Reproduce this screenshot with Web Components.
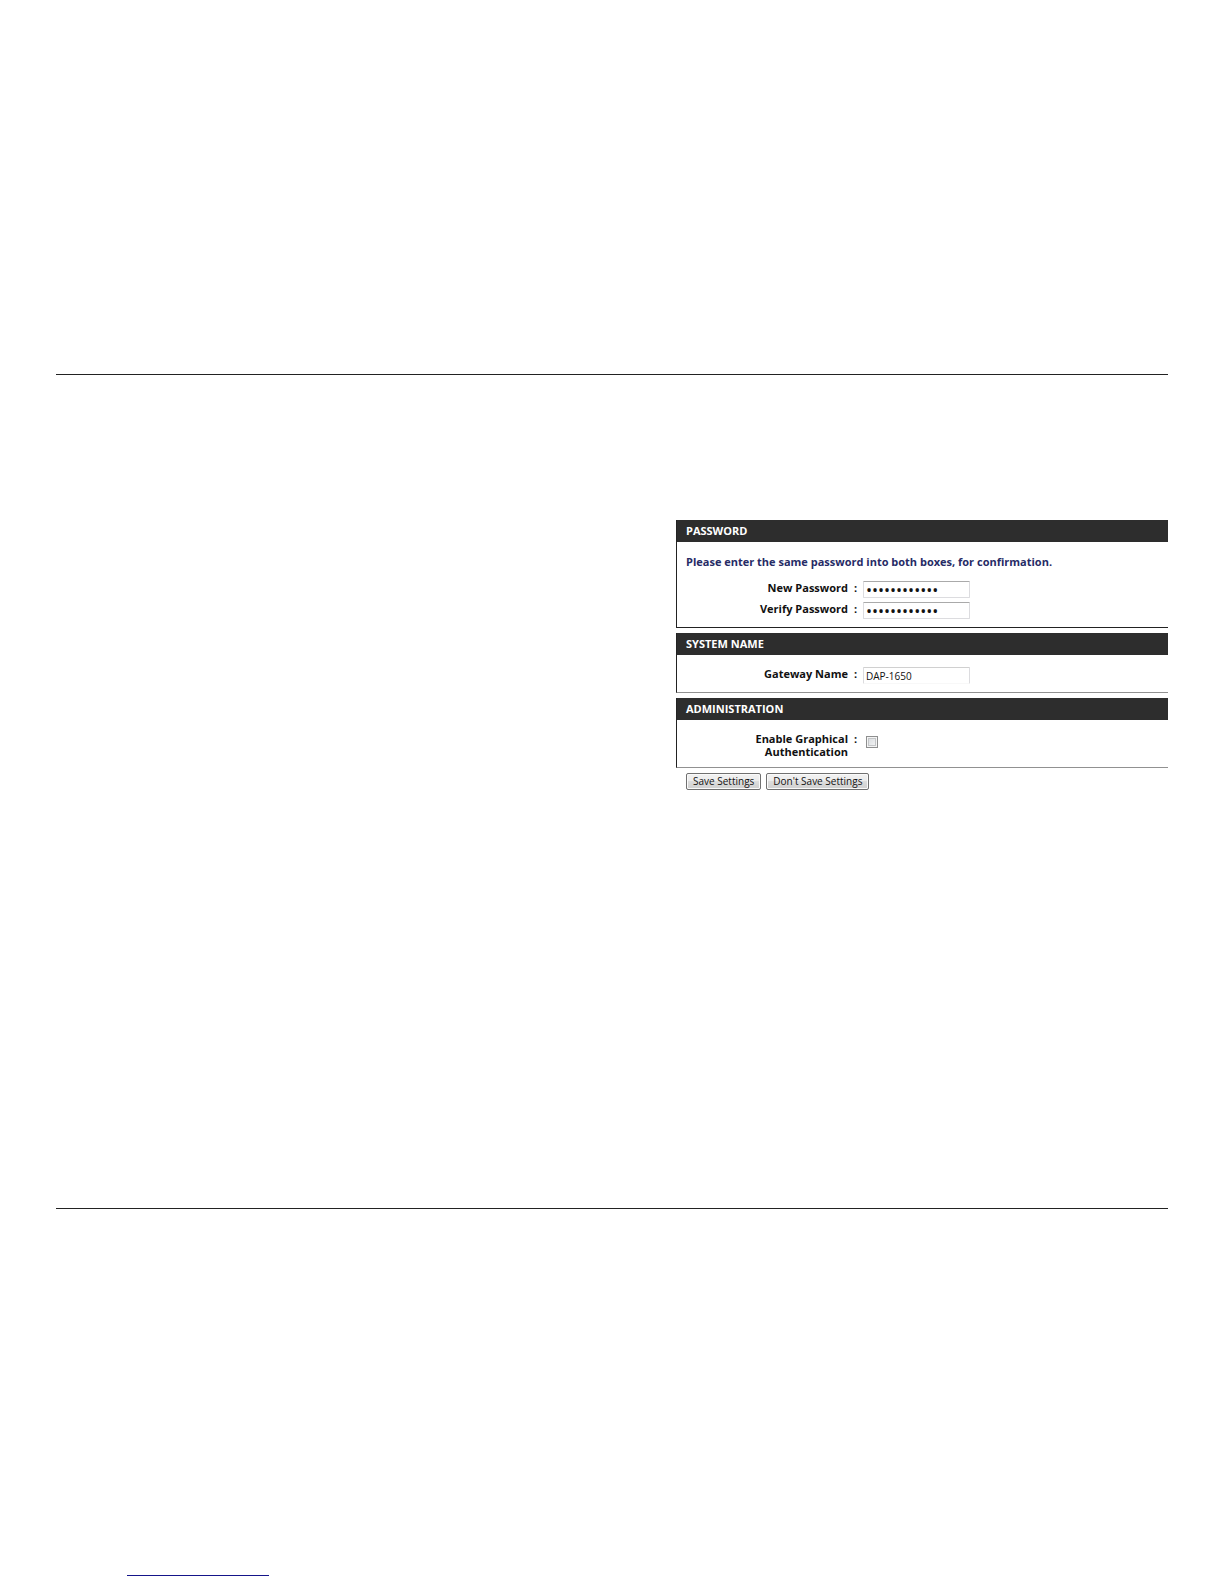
<!DOCTYPE html>
<html lang="en">
<head>
<meta charset="utf-8">
<title>Admin</title>
<style>
    body {
        margin: 0;
        background: #fff;
        color: #111;
        font: 11px/13px "Open Sans", Tahoma, sans-serif;
    }
</style>
</head>
<body>
<manual-page>
    <settings-panel heading="PASSWORD" style="--edge: #222">
        <p slot="intro">Please enter the same password into both boxes, for confirmation.</p>
        <setting-row label="New Password" type="password" value="password1234"></setting-row>
        <setting-row label="Verify Password" type="password" value="password1234"></setting-row>
    </settings-panel>
    <settings-panel heading="SYSTEM NAME">
        <setting-row label="Gateway Name" type="text" value="DAP-1650"></setting-row>
    </settings-panel>
    <settings-panel heading="ADMINISTRATION">
        <setting-row label="Enable Graphical Authentication" type="checkbox"></setting-row>
    </settings-panel>
    <action-bar></action-bar>
    <footer-link slot="footer"></footer-link>
</manual-page>

<script>
class ManualPage extends HTMLElement {
    constructor() {
        super();
        this.attachShadow({ mode: 'open' });
    }

    connectedCallback() {
        this.shadowRoot.innerHTML = `
            <style>
                :host {
                    display: flex;
                    flex-direction: column;
                    box-sizing: border-box;
                    min-height: 100vh;
                    padding: 374px 56px 8px;
                }
                main {
                    display: grid;
                    grid-template-columns: 620px 1fr;
                    min-height: 833px;
                    border-top: 1px solid #222;
                    border-bottom: 1px solid #222;
                }
                .settings {
                    grid-column: 2;
                    padding-top: 145px;
                }
                footer {
                    margin-top: auto;
                    padding-left: 71px;
                }
            </style>
            <main>
                <div class="settings"><slot></slot></div>
            </main>
            <footer><slot name="footer"></slot></footer>
            `;
    }
}

class SettingsPanel extends HTMLElement {
    constructor() {
        super();
        this.attachShadow({ mode: 'open' });
    }

    connectedCallback() {
        this.shadowRoot.innerHTML = `
            <style>
                :host {
                    display: block;
                    margin-bottom: 5px;
                    border-left: 1px solid #222;
                    border-bottom: 1px solid var(--edge, #919191);
                }
                h2 {
                    margin: 0;
                    padding: 0 9px;
                    background: #2d2d2d;
                    color: #fff;
                    font-size: 11px;
                    font-weight: bold;
                    line-height: 22px;
                }
                .body {
                    display: flex;
                    flex-direction: column;
                    gap: 4px;
                    padding: 12px 9px 8px;
                }
                ::slotted(p) {
                    margin: 0 0 8px;
                    color: #262b66;
                    font-weight: bold;
                    line-height: 15px;
                }
            </style>
            <h2>${this.getAttribute('heading')}</h2>
            <div class="body">
                <slot name="intro"></slot>
                <slot></slot>
            </div>
            `;
    }
}

class SettingRow extends HTMLElement {
    constructor() {
        super();
        this.attachShadow({ mode: 'open' });
    }

    connectedCallback() {
        const type = this.getAttribute('type');
        const value = this.getAttribute('value');
        this.shadowRoot.innerHTML = `
            <style>
                :host {
                    display: flex;
                    align-items: flex-start;
                    font-weight: bold;
                }
                label {
                    width: 120px;
                    padding: 0 0 1px 42px;
                    text-align: right;
                }
                .colon {
                    width: 15px;
                    text-align: center;
                }
                input {
                    box-sizing: border-box;
                    margin: 0;
                    font: 10px/13px "Open Sans", Tahoma, sans-serif;
                    color: #111;
                    background: #fff;
                }
                [type=text], [type=password] {
                    width: 107px;
                    height: 17px;
                    padding: 1px 2px;
                    border: 1px solid #dcdcdf;
                    border-top-color: #aaa;
                    border-radius: 1px;
                }
                [type=password] {
                    font-size: 16px;
                }
                [type=text] {
                    border-top-color: #d0d0d0;
                    border-bottom-color: #f8f8f8;
                }
                [type=checkbox] {
                    appearance: none;
                    width: 12px;
                    height: 12px;
                    margin: 4px 3px 0;
                    border: 1px solid #8e8f8f;
                    background: linear-gradient(135deg, #d4d8dc, #f8f8f8);
                    box-shadow: inset 0 0 0 1px #f4f4f4, inset 0 0 0 2px #c4c6c8;
                }
            </style>
            <label for="field">${this.getAttribute('label')}</label>
            <span class="colon">:</span>
            <input id="field" type="${type}"${value ? ` value="${value}"` : ''}>
            `;
    }
}

class ActionBar extends HTMLElement {
    constructor() {
        super();
        this.attachShadow({ mode: 'open' });
    }

    connectedCallback() {
        this.shadowRoot.innerHTML = `
            <style>
                :host {
                    display: flex;
                    gap: 5px;
                    padding-left: 10px;
                }
                button {
                    height: 17px;
                    padding: 0 6px 1px;
                    border: 1px solid #707070;
                    border-radius: 2px;
                    background: linear-gradient(#f2f2f2, #ebebeb 50%, #dddddd 50%, #cfcfcf);
                    box-shadow: inset 0 0 0 1px #fafafa;
                    color: #111;
                    font: 10px/14px "Open Sans", Tahoma, sans-serif;
                    white-space: nowrap;
                }
            </style>
            <button type="button">Save Settings</button>
            <button type="button">Don't Save Settings</button>
            `;
    }
}

class FooterLink extends HTMLElement {
    constructor() {
        super();
        this.attachShadow({ mode: 'open' });
    }

    connectedCallback() {
        this.shadowRoot.innerHTML = `
            <style>
                :host {
                    display: block;
                }
                a {
                    display: block;
                    width: 142px;
                    height: 14px;
                    border-bottom: 1px solid #15158a;
                }
            </style>
            <a href="#top" aria-label="Back to top"></a>
            `;
    }
}

customElements.define("manual-page", ManualPage);
customElements.define("settings-panel", SettingsPanel);
customElements.define("setting-row", SettingRow);
customElements.define("action-bar", ActionBar);
customElements.define("footer-link", FooterLink);
</script>
</body>
</html>
